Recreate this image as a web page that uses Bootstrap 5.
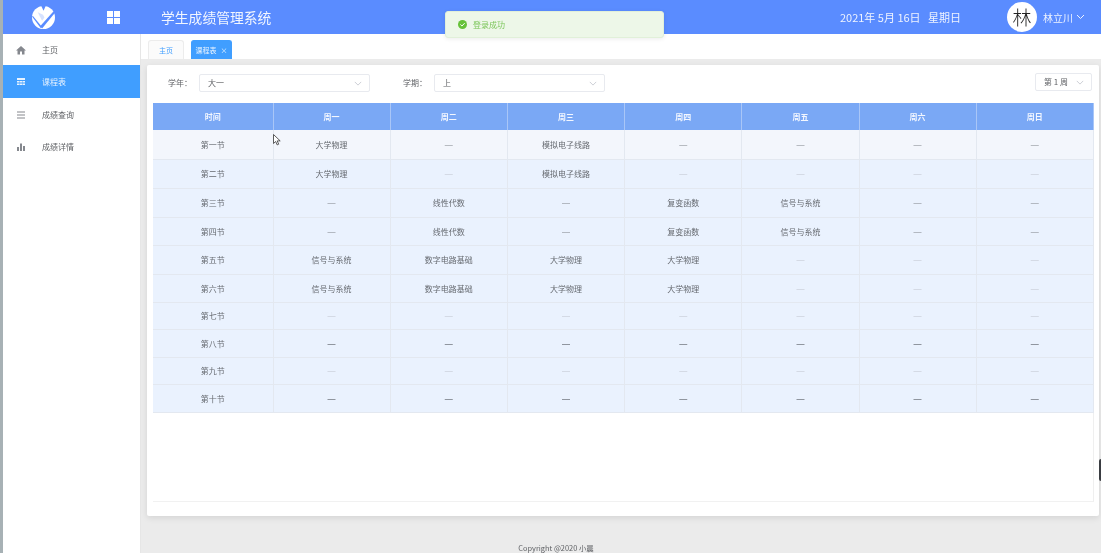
<!DOCTYPE html>
<html lang="zh-CN">
<head>
<meta charset="utf-8">
<title>学生成绩管理系统</title>
<link rel="stylesheet" href="https://cdn.jsdelivr.net/npm/bootstrap@5.3.0/dist/css/bootstrap.min.css">
<style>
html,body{height:553px;overflow:hidden}
body{font-family:"Noto Sans CJK SC","Liberation Sans",sans-serif;font-size:8px;color:#606266;background:#ebebeb;padding-left:3px;position:relative;filter:blur(.35px)}
.strip{position:absolute;left:0;top:0;bottom:0;width:3px;background:#a7b1b5}
.topbar{height:34px;background:#5a8cff;color:#fff;padding:0;flex-wrap:nowrap;justify-content:flex-start}
.logo-box{margin-left:29px;width:23px;height:23px;flex:none}
.grid-ic{margin-left:52px;width:13px;height:13px;flex:none}
.sys-title{margin-left:41px;font-size:13.8px;line-height:20px;color:#f2f6ff;white-space:nowrap}
.date-txt{margin-left:auto;font-size:11px;color:#eef3ff;white-space:pre}
.avatar-o{margin-left:46px;width:30px;height:30px;border-radius:50%;background:#fff;color:#222;font-family:"Noto Sans CJK SC",serif;font-weight:300;font-size:19px;line-height:30px;text-align:center;flex:none}
.user-n{margin-left:6px;font-size:10px;color:#eef3ff;white-space:nowrap}
.user-c{margin-left:3px;margin-right:16px;width:9px;height:6px}
.shell{height:519px}
.side{width:138px;flex:none;background:#fff;border-right:1px solid #e6e6e6}
.side .list-group-item{height:32px;border:0;border-radius:0;padding:1px 0 0 13px;display:flex;align-items:center;font-size:8px;color:#606266;background:transparent}
.side .list-group-item.active{background:#409eff;color:#e8f3ff;height:33px}
.side .list-group-item:first-child{padding-top:0}
.side svg{width:10px;height:10px;margin-right:16px;flex:none}
.main-col{flex:1;min-width:0}
.tabbar{height:25px;background:#fff;padding:6px 0 0 7px;gap:7px}
.tab-i{height:19px;border:1px solid #ececec;border-bottom:0;border-radius:3px 3px 0 0;font-size:7px;color:#409eff;line-height:18px;text-align:center;background:#fbfbfb}
.tab-a{width:41px;background:#409eff;border-color:#409eff;color:#e8f3ff}
.tab-h{width:36px}
.tab-x{margin-left:4px;font-size:7px}
.panel{margin:6px 2px 0 6px;height:451px;border:0;border-radius:2px;background:#fff;box-shadow:0 2px 6px rgba(0,0,0,.1);padding:9px 5px 14px 6px;display:flex;flex-direction:column}
.filter-r{height:18px;margin:0 0 11px 0;align-items:center}
.f-lab{font-size:8px;color:#606266;white-space:nowrap}
.f-y{margin-left:15px;width:31px}
.f-t{margin-left:33px;width:31px}
.form-select.pick{height:18px;min-height:0;padding:0 8px;font-size:8px;color:#606266;border:1px solid #e8eaef;border-radius:2px;box-shadow:none;background-size:8px 5px;background-position:right 7px center;background-image:url("data:image/svg+xml,%3Csvg xmlns='http://www.w3.org/2000/svg' viewBox='0 0 10 6'%3E%3Cpath d='M1 1l4 4 4-4' fill='none' stroke='%23c0c4cc'/%3E%3C/svg%3E")}
.pick-w{width:171px}
.pick-s{width:57px;margin-left:auto;margin-right:2px;position:relative;top:-1px}
.tbl-wrap{flex:1;border-right:1px solid #efefef;border-bottom:1px solid #f1f1f1;width:941px}
.tt{table-layout:fixed;width:941px;margin:0;border-collapse:collapse;font-size:8px;--bs-table-bg:transparent}
.tt th,.tt td{padding:1px 0 0;text-align:center;vertical-align:middle;border:1px solid #e3e8f0;border-width:0 1px 1px 0;line-height:10px}
.tt th{height:27px;background:#7aa8f5;color:#f3f7ff;font-weight:700;border-color:#a9c6f7;border-bottom:0}
.tt td{background:#eaf2fe;color:#666a70}
.tt tbody tr.r-a td{height:29px}
.tt tbody tr.r-s td{height:28px}
.tt tbody tr.r-b td{height:27px}
.tt tbody tr.r-f td{background:#f3f6fc}
.tt .dh{font-family:"Liberation Sans",sans-serif;color:#7d8187}
.tt .dl{font-family:"Liberation Sans",sans-serif;color:#c0c5cd}
.tt .dk{font-family:"Liberation Sans",sans-serif;color:#33373d}
.foot-l{margin-top:27px;padding-right:130px;text-align:center;font-size:7.4px;line-height:10px;color:#606266}
.toast-m{position:absolute;left:445px;top:11px;width:219px;height:27px;background:#edf7e8;border:1px solid #e1f0d9;border-radius:3px;color:#7cc65a;display:flex;align-items:center;padding:0 0 0 12px;font-size:8px;box-shadow:0 1px 4px rgba(0,0,0,.08);margin:0}
.toast-m svg{width:9px;height:9px;margin-right:6px}
.cursor-ic{position:absolute;left:273px;top:134px;width:8px;height:12px}
.edge-th{position:absolute;right:0;top:459px;width:2px;height:22px;background:#3a3d42;border-radius:2px 0 0 2px}
</style>
</head>
<body>
<div class="strip"></div>
<nav class="navbar topbar">
  <svg class="logo-box" viewBox="0 0 24 24"><circle cx="12" cy="12" r="12" fill="#fff"/><path d="M9.5-.5h5L12 5z" fill="#5a8cff"/><path d="M22.5 5.5L24 7 10.5 23.5 8.5 21z" fill="#5a8cff"/><path d="M0 11l1-.5 9.5 11.5-1.5 1z" fill="#5a8cff"/><path d="M6 6.5l5.5 2.5 1.5 3-2.5 3.5z" fill="#5a8cff" opacity=".25"/></svg>
  <svg class="grid-ic" viewBox="0 0 13 13" fill="#fff"><rect width="6" height="6"/><rect x="7" width="6" height="6"/><rect y="7" width="6" height="6"/><rect x="7" y="7" width="6" height="6"/></svg>
  <span class="sys-title">学生成绩管理系统</span>
  <span class="date-txt">2021年 5月 16日   星期日</span>
  <span class="avatar-o">林</span>
  <span class="user-n">林立川</span>
  <svg class="user-c" viewBox="0 0 9 6"><path d="M1 1l3.5 3.5L8 1" fill="none" stroke="#eef3ff"/></svg>
</nav>
<div class="d-flex shell">
  <aside class="side">
    <div class="list-group list-group-flush">
      <a class="list-group-item" href="#"><svg viewBox="0 0 10 10" fill="#85888e"><path d="M5 1L0 5.5h1.5V9.5h2.5V6.5h2V9.5h2.5V5.5H10z"/></svg>主页</a>
      <a class="list-group-item active" href="#"><svg viewBox="0 0 10 10" fill="#e8f3ff"><path d="M1 1h8v2H1zM1 4h2.4v1.6H1zM3.8 4h2.4v1.6H3.8zM6.6 4H9v1.6H6.6zM1 6.4h2.4V8H1zM3.8 6.4h2.4V8H3.8zM6.6 6.4H9V8H6.6z"/></svg>课程表</a>
      <a class="list-group-item" href="#"><svg viewBox="0 0 10 10" fill="#85888e"><path d="M1 1.5h8v1H1zM1 4.5h8v1H1zM1 7.5h8v1H1z"/></svg>成绩查询</a>
      <a class="list-group-item" href="#"><svg viewBox="0 0 10 10" fill="#85888e"><path d="M1 5h2v4H1zM4 1.5h2V9H4zM7 4h2v5H7z"/></svg>成绩详情</a>
    </div>
  </aside>
  <div class="main-col d-flex flex-column">
    <div class="tabbar d-flex">
      <div class="tab-i tab-h">主页</div>
      <div class="tab-i tab-a">课程表<span class="tab-x">×</span></div>
    </div>
    <div class="card panel">
      <div class="d-flex filter-r">
        <span class="f-lab f-y">学年：</span>
        <select class="form-select pick pick-w"><option>大一</option></select>
        <span class="f-lab f-t">学期：</span>
        <select class="form-select pick pick-w"><option>上</option></select>
        <select class="form-select pick pick-s"><option>第 1 周</option></select>
      </div>
      <div class="tbl-wrap">
        <table class="table tt">
          <colgroup><col style="width:120px"><col span="7"></colgroup>
          <thead><tr><th>时间</th><th>周一</th><th>周二</th><th>周三</th><th>周四</th><th>周五</th><th>周六</th><th>周日</th></tr></thead>
          <tbody>
            <tr class="r-a r-f"><td>第一节</td><td>大学物理</td><td class="dh">—</td><td>模拟电子线路</td><td class="dh">—</td><td class="dh">—</td><td class="dh">—</td><td class="dh">—</td></tr>
            <tr class="r-a"><td>第二节</td><td>大学物理</td><td class="dl">—</td><td>模拟电子线路</td><td class="dl">—</td><td class="dl">—</td><td class="dl">—</td><td class="dl">—</td></tr>
            <tr class="r-a"><td>第三节</td><td class="dh">—</td><td>线性代数</td><td class="dh">—</td><td>复变函数</td><td>信号与系统</td><td class="dh">—</td><td class="dh">—</td></tr>
            <tr class="r-s"><td>第四节</td><td class="dh">—</td><td>线性代数</td><td class="dh">—</td><td>复变函数</td><td>信号与系统</td><td class="dh">—</td><td class="dh">—</td></tr>
            <tr class="r-a"><td>第五节</td><td>信号与系统</td><td>数字电路基础</td><td>大学物理</td><td>大学物理</td><td class="dl">—</td><td class="dl">—</td><td class="dl">—</td></tr>
            <tr class="r-s"><td>第六节</td><td>信号与系统</td><td>数字电路基础</td><td>大学物理</td><td>大学物理</td><td class="dl">—</td><td class="dl">—</td><td class="dl">—</td></tr>
            <tr class="r-b"><td>第七节</td><td class="dl">—</td><td class="dl">—</td><td class="dl">—</td><td class="dl">—</td><td class="dl">—</td><td class="dl">—</td><td class="dl">—</td></tr>
            <tr class="r-s"><td>第八节</td><td class="dk">—</td><td class="dk">—</td><td class="dk">—</td><td class="dk">—</td><td class="dk">—</td><td class="dk">—</td><td class="dk">—</td></tr>
            <tr class="r-b"><td>第九节</td><td class="dl">—</td><td class="dl">—</td><td class="dl">—</td><td class="dl">—</td><td class="dl">—</td><td class="dl">—</td><td class="dl">—</td></tr>
            <tr class="r-s"><td>第十节</td><td class="dk">—</td><td class="dk">—</td><td class="dk">—</td><td class="dk">—</td><td class="dk">—</td><td class="dk">—</td><td class="dk">—</td></tr>
          </tbody>
        </table>
      </div>
    </div>
    <div class="foot-l">Copyright @2020 小晨</div>
  </div>
</div>
<div class="alert toast-m" role="alert"><svg viewBox="0 0 10 10"><circle cx="5" cy="5" r="5" fill="#67c23a"/><path d="M2.7 5l1.7 1.7 3-3.2" fill="none" stroke="#fff" stroke-width="1.1"/></svg>登录成功</div>
<svg class="cursor-ic" viewBox="0 0 8 12"><path d="M.5.5v9l2.2-2 1.5 3.4 1.5-.7-1.5-3.3h3z" fill="#fff" stroke="#333" stroke-width=".8"/></svg>
<div class="edge-th"></div>
<script src="https://cdn.jsdelivr.net/npm/bootstrap@5.3.0/dist/js/bootstrap.bundle.min.js"></script>
</body>
</html>
